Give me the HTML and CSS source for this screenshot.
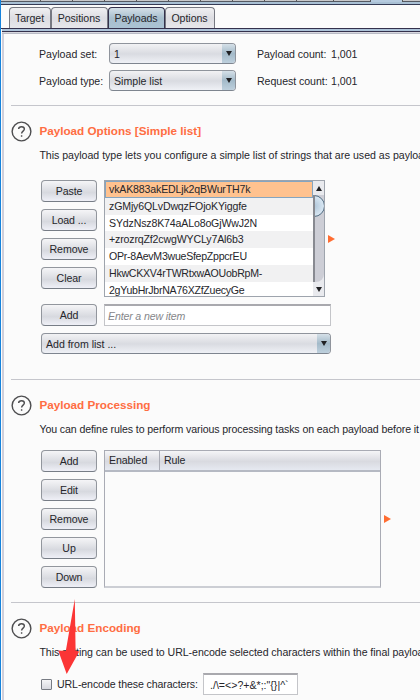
FILE: index.html
```html
<!DOCTYPE html>
<html lang="en">
<head>
<meta charset="utf-8">
<title>Payloads</title>
<link rel="stylesheet" href="styles.css">
</head>
<body>
<div class="window">
  <div class="upper-tabs"><i></i><i></i><i></i><i></i><i></i><i></i><i></i><i></i><i></i><i class="wide"></i><i class="wide"></i><i class="current"></i><i></i></div>
  <nav class="tabs">
    <span class="tab t1">Target</span><span class="tab t2">Positions</span><span class="tab t3 active">Payloads</span><span class="tab t4">Options</span>
  </nav>
  <main class="pane">
    <section class="sets">
      <div class="set-row"><label>Payload set:</label><div class="select"><span>1</span><b><svg viewBox="0 0 6 5"><path d="M0 0H6L3 5Z"/></svg></b></div><span class="count">Payload count:</span><span>1,001</span></div>
      <div class="set-row"><label>Payload type:</label><div class="select"><span>Simple list</span><b><svg viewBox="0 0 6 5"><path d="M0 0H6L3 5Z"/></svg></b></div><span class="count">Request count:</span><span>1,001</span></div>
    </section>
    <section class="options">
      <header><svg class="help" viewBox="0 0 22 22"><circle cx="11" cy="11" r="9.8"/><path d="M8 8.3C8.2 5.2 14 5.2 14 8.4C14 10.5 11.1 10.7 11.1 13.2M11.1 14.9V16.6"/></svg><h2>Payload Options [Simple list]</h2></header>
      <p>This payload type lets you configure a simple list of strings that are used as payloa</p>
      <div class="columns">
        <div class="buttons"><button>Paste</button><button>Load ...</button><button>Remove</button><button>Clear</button></div>
        <div class="list">
          <ul><li class="selected">vkAK883akEDLjk2qBWurTH7k</li><li>zGMjy6QLvDwqzFOjoKYiggfe</li><li>SYdzNsz8K74aALo8oGjWwJ2N</li><li>+zrozrqZf2cwgWYCLy7Al6b3</li><li class="tight">OPr-8AevM3wueSfepZppcrEU</li><li class="tight">HkwCKXV4rTWRtxwAOUobRpM-</li><li class="tight">2gYubHrJbrNA76XZfZuecyGe</li></ul>
          <div class="scroll"><span class="arrow"><svg viewBox="0 0 6 5"><path d="M0 5H6L3 0Z"/></svg></span><span class="track"><i></i></span><span class="arrow"><svg viewBox="0 0 6 5"><path d="M0 0H6L3 5Z"/></svg></span></div>
        </div>
        <svg class="expand" viewBox="0 0 7 8"><path d="M0 0L7 4L0 8Z"/></svg>
      </div>
      <div class="add-row"><button>Add</button><div class="input hint">Enter a new item</div></div>
      <div class="select from-list"><span>Add from list ...</span><b><svg viewBox="0 0 6 5"><path d="M0 0H6L3 5Z"/></svg></b></div>
    </section>
    <section class="processing">
      <header><svg class="help" viewBox="0 0 22 22"><circle cx="11" cy="11" r="9.8"/><path d="M8 8.3C8.2 5.2 14 5.2 14 8.4C14 10.5 11.1 10.7 11.1 13.2M11.1 14.9V16.6"/></svg><h2>Payload Processing</h2></header>
      <p>You can define rules to perform various processing tasks on each payload before it</p>
      <div class="columns">
        <div class="buttons"><button>Add</button><button>Edit</button><button>Remove</button><button>Up</button><button>Down</button></div>
        <div class="table"><div class="thead"><span>Enabled</span><span>Rule</span></div></div>
        <svg class="expand" viewBox="0 0 7 8"><path d="M0 0L7 4L0 8Z"/></svg>
      </div>
    </section>
    <section class="encoding">
      <header><svg class="help" viewBox="0 0 22 22"><circle cx="11" cy="11" r="9.8"/><path d="M8 8.3C8.2 5.2 14 5.2 14 8.4C14 10.5 11.1 10.7 11.1 13.2M11.1 14.9V16.6"/></svg><h2>Payload Encoding</h2></header>
      <p>This setting can be used to URL-encode selected characters within the final payloa</p>
      <div class="encode-row"><span class="check"></span><span class="check-label">URL-encode these characters:</span><div class="input chars">./\=&lt;&gt;?+&amp;*;:"{}|^`</div></div>
      <svg class="pointer" viewBox="0 0 22 76"><path d="M16.8 0L17.6 51.8L21.2 52.6L8.7 75L.2 51.5L7.8 52Z"/></svg>
    </section>
  </main>
</div>
</body>
</html>
```
FILE: styles.css
```css
* { box-sizing: border-box; }
body { margin: 0; overflow: hidden; background: #fbfbfb; color: #26262b; font: 10.6px/14px "Liberation Sans", Arial, sans-serif; }
.window { width: 420px; height: 700px; overflow: hidden; border-left: 1px solid #1582dc; }
.upper-tabs { display: flex; height: 2px; padding-left: 8px; border-bottom: 1px solid #555962; background: #c9c9cb; }
.upper-tabs i { width: 32px; flex: none; border-right: 1px solid #555; }
.upper-tabs .wide { width: 37px; }
.upper-tabs .current { height: 2px; background: #b6cbdf; }
.tabs { display: flex; height: 27px; padding: 3px 0 0 8px; border-top: 2px solid #a9c0d4; box-shadow: inset 0 1px #353b55; border-bottom: 1px solid #34314c; }
.tab { height: 21px; padding-right: 1px; border: 1px solid #777982; border-bottom: 0; border-radius: 4px 4px 0 0; background: linear-gradient(#f0f0f2, #dddde2 50%, #e7e7eb); text-align: center; line-height: 20px; white-space: nowrap; letter-spacing: -.05px; }
.t1 { width: 42px; } .t2 { width: 57px; } .t3 { width: 57px; } .t4 { width: 50px; }
.tab.active { border-color: #34314c; background: linear-gradient(#d5e0e8, #a8bfce 50%, #abc3d3); }
.pane { height: 671px; margin-left: 1px; border-top: 2px solid #adc3d9; box-shadow: inset 0 1px #34314c, inset 0 2px #d8d8df, inset 0 3px #b9bbc6, inset 2px 0 #cfcfdb; }
.sets { height: 74px; padding: 9px 0 0 37px; }
.set-row { display: flex; align-items: center; height: 27px; white-space: pre; }
.set-row label { width: 70px; }
.select { display: flex; justify-content: space-between; align-items: center; width: 127px; height: 21px; padding-left: 4px; border: 1px solid #8f949c; border-bottom-color: #7e858f; border-radius: 4px; background: linear-gradient(#f2f2f4, #d9dbe1 52%, #eff1f6); overflow: hidden; }
.select b { display: grid; place-items: center; width: 13px; height: 100%; background: linear-gradient(#d5e0e8, #a3bac9 50%, #bed0dd); }
.select svg, .arrow svg { width: 6px; height: 5px; fill: #202124; }
.set-row .count { width: 74px; margin-left: 21px; letter-spacing: -.05px; }
section { margin-left: 9px; position: relative; white-space: nowrap; }
.sets { margin-left: 0; }
section + section { border-top: 1px solid #c5c6cc; }
.options { height: 274px; }
.processing { height: 223px; }
.encoding { height: 98px; }
header { display: flex; height: 36px; padding-top: 15px; align-items: flex-start; }
.help { width: 21px; height: 21px; flex: none; fill: none; stroke: #4e4e50; stroke-width: 1.5; }
h2 { margin: 3px 0 0 7.4px; color: #ff6d42; font: bold 11.7px/14px "Liberation Sans", Arial, sans-serif; }
p { margin: 6px 0 0 28.4px; letter-spacing: -.02px; }
.processing p { letter-spacing: -.1px; }
.encoding p { letter-spacing: -.05px; }
.columns { display: flex; margin: 18px 0 0 30px; align-items: flex-start; }
.processing .columns { margin-top: 14px; }
.buttons { display: flex; flex-direction: column; gap: 7px; width: 56px; margin-right: 7px; }
button { width: 56px; height: 22px; padding: 0; border: 1px solid #92969d; border-bottom-color: #777d86; border-radius: 4px; background: linear-gradient(#f5f5f7, #d7d9df 58%, #eff0f7); color: #26262b; font: inherit; letter-spacing: -.1px; }
.list { display: flex; width: 221px; height: 117px; border: 1px solid #9ea4ad; background: #fff; overflow: hidden; }
ul { margin: 0; padding: 0; width: 208px; list-style: none; letter-spacing: -.16px; }
li { height: 16.8px; padding-left: 4px; line-height: 16.8px; }
li:nth-child(even) { background: #f1f1f2; }
.tight { letter-spacing: -.27px; }
.list .selected { border: 1px solid #85a5c0; padding-left: 3px; background: #ffc28f; line-height: 15px; }
.scroll { width: 11px; display: flex; flex-direction: column; background: #e9eaee; }
.arrow { display: grid; place-items: center; height: 14px; }
.track { flex: 1; overflow: hidden; border-left: 2px solid #888a91; background: #cdced6; border-radius: 0 0 8px 0; }
.track i { display: block; width: 22px; height: 22px; margin-left: -12px; border: 1px solid #506b80; border-radius: 50%; background: radial-gradient(#afc5d8, #eaf5fe); }
.expand { width: 7px; height: 8px; margin: 55px 0 0 3px; fill: #ff6d32; }
.processing .expand { margin-top: 65px; }
.add-row { display: flex; gap: 7px; margin: 7px 0 7px 30px; }
.input { height: 22px; width: 227px; padding-left: 3px; line-height: 20px; border: 1px solid #c4c5c9; border-top: 2px solid #a9a9ae; background: #fff; }
.hint { color: #85868a; font-style: italic; letter-spacing: -.15px; }
.from-list { width: 290px; margin-left: 30px; letter-spacing: -.03px; }
.table { width: 277px; height: 138px; border: 1px solid #a9abb4; border-bottom-width: 2px; border-bottom-color: #ccced4; }
.thead { display: flex; height: 21px; line-height: 19px; border-bottom: 2px solid #b5b9c3; background: linear-gradient(#f5f5f7, #d9dae0 55%, #e6e9f1); }
.thead span { width: 55px; padding-left: 4px; border-right: 1px solid #a9abb4; letter-spacing: -.1px; }
.thead span + span { border: 0; }
.encode-row { display: flex; align-items: center; margin: 14px 0 0 30px; }
.check { width: 11px; height: 11px; border: 1px solid #777b83; border-radius: 1px; background: linear-gradient(#f5f5f7, #d7d8df); margin-right: 5px; }
.check-label { width: 146px; letter-spacing: -.1px; }
.chars { width: 95px; padding-left: 6px; }
.pointer { position: absolute; left: 47px; top: -4px; width: 22px; height: 76px; fill: #fb3535; }
```
